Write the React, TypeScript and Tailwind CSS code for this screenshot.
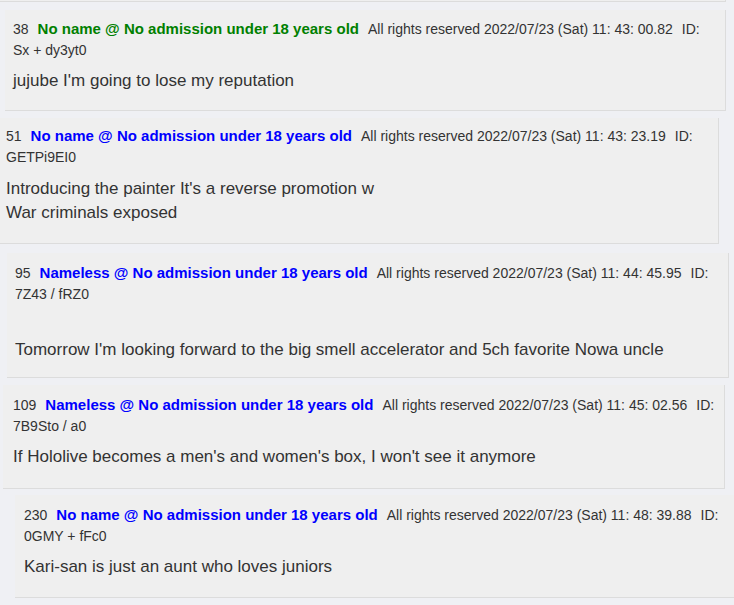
import React from "react";

interface Post {
  num: number;
  name: string;
  nameColor: string;
  date: string;
  id: string;
  body: string[];
  box: string;
  text: string;
}

const posts: Post[] = [
  {
    num: 38,
    name: "No name @ No admission under 18 years old",
    nameColor: "text-[#008000]",
    date: "2022/07/23 (Sat) 11: 43: 00.82",
    id: "Sx + dy3yt0",
    body: ["jujube I'm going to lose my reputation"],
    box: "mt-[8px] ml-[5px] w-[721px] pt-[9px] pb-[17px] px-2",
    text: "mt-[8px]",
  },
  {
    num: 51,
    name: "No name @ No admission under 18 years old",
    nameColor: "text-[#0000ff]",
    date: "2022/07/23 (Sat) 11: 43: 23.19",
    id: "GETPi9EI0",
    body: ["Introducing the painter It's a reverse promotion w", "War criminals exposed"],
    box: "mt-[7px] ml-0 w-[719px] pt-[8px] pb-[18px] px-[6px]",
    text: "mt-[9px]",
  },
  {
    num: 95,
    name: "Nameless @ No admission under 18 years old",
    nameColor: "text-[#0000ff]",
    date: "2022/07/23 (Sat) 11: 44: 45.95",
    id: "7Z43 / fRZ0",
    body: ["Tomorrow I'm looking forward to the big smell accelerator and 5ch favorite Nowa uncle"],
    box: "mt-[9px] ml-[7px] w-[722px] pt-[10px] pb-[15px] px-2",
    text: "mt-[33px]",
  },
  {
    num: 109,
    name: "Nameless @ No admission under 18 years old",
    nameColor: "text-[#0000ff]",
    date: "2022/07/23 (Sat) 11: 45: 02.56",
    id: "7B9Sto / a0",
    body: ["If Hololive becomes a men's and women's box, I won't see it anymore"],
    box: "mt-[7px] ml-[3px] w-[722px] pt-[10px] pb-[19px] px-[10px]",
    text: "mt-[8px]",
  },
  {
    num: 230,
    name: "No name @ No admission under 18 years old",
    nameColor: "text-[#0000ff]",
    date: "2022/07/23 (Sat) 11: 48: 39.88",
    id: "0GMY + fFc0",
    body: ["Kari-san is just an aunt who loves juniors"],
    box: "mt-[6px] ml-[15px] w-[722px] pt-[10px] pb-[18px] px-[9px]",
    text: "mt-[8px]",
  },
];

function PostCard({ post }: { post: Post }) {
  return (
    <div className={`${post.box} shrink-0 border-r border-b border-[#dcdcdc] bg-[#efefef]`}>
      <div className="whitespace-nowrap text-[14px] leading-[21px] text-[#333]">
        <span>{post.num}</span>
        <b className={`ml-[9px] text-[15px] leading-[17px] font-bold ${post.nameColor}`}>{post.name}</b>
        <span className="ml-[9px]">
          All rights reserved {post.date}
          <span className="ml-[9px]">ID:</span>
        </span>
        <br />
        <span>{post.id}</span>
      </div>
      <div className={`${post.text} text-[17px] leading-6 text-[#333]`}>
        {post.body.map((line) => (
          <div key={line}>{line}</div>
        ))}
      </div>
    </div>
  );
}

export default function App() {
  return (
    <div
      className="min-h-[605px] w-[734px] overflow-hidden bg-[#eff0f4]"
      style={{ fontFamily: '"Liberation Sans", Arial, sans-serif' }}
    >
      <div className="h-[2px] w-[726px] border-r border-b border-[#dcdcdc] bg-[#efefef]" />
      {posts.map((post) => (
        <PostCard key={post.num} post={post} />
      ))}
    </div>
  );
}
